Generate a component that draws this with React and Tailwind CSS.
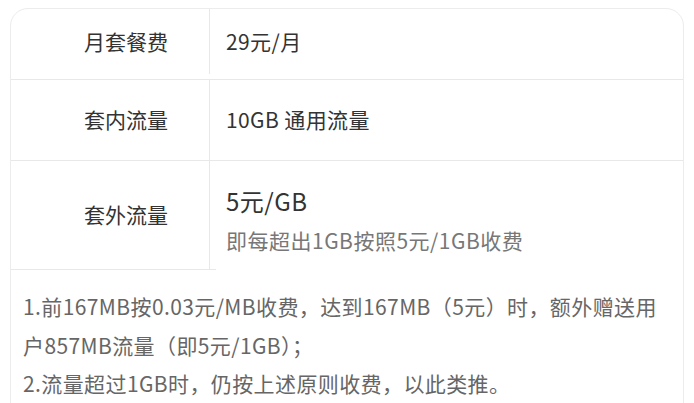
import React from 'react';

const rows = [
  { label: '月套餐费', value: '29元/月', h: 'h-[70px] pb-[5px]' },
  { label: '套内流量', value: '10GB 通用流量', h: 'h-[80px]' },
];

const App = () => {
  return (
    <div className="min-h-screen w-full bg-white pt-[8px] pl-[10px] pr-[10px] font-['Noto_Sans_CJK_SC','Noto_Sans',sans-serif]">
      <div className="rounded-t-[18px] border border-[#ececec] bg-white pb-10">
        {rows.map((r) => (
          <div key={r.label} className="border-b border-[#e8e8e8]">
            <div className={`flex ${r.h}`}>
              <div className="flex w-[199px] shrink-0 items-center justify-center border-r border-[#e8e8e8] pl-[32px] text-[21px] text-[#333]">
                {r.label}
              </div>
              <div className="flex items-center pl-[16px] text-[21px] tracking-[0.4px] text-[#333]">{r.value}</div>
            </div>
          </div>
        ))}

        {/* 套外流量 */}
        <div className="flex h-[108px]">
          <div className="flex w-[199px] shrink-0 items-center justify-center border-r border-[#e8e8e8] pl-[32px] text-[21px] text-[#333]">
            套外流量
          </div>
          <div className="flex flex-col justify-center pl-[16px] pt-[10px]">
            <p className="text-[24px] leading-[30px] tracking-[0.5px] text-[#333]">5元/GB</p>
            <p className="mt-[10px] text-[21px] leading-[28px] tracking-[0.5px] text-[#777]">即每超出1GB按照5元/1GB收费</p>
          </div>
        </div>
        <div className="h-px w-[205px] bg-[#e8e8e8]" />

        <div className="px-[12px] pt-[17px] text-[21px] leading-[38.5px] tracking-[0.4px] text-[#666]">
          <p>1.前167MB按0.03元/MB收费，达到167MB（5元）时，额外赠送用户857MB流量（即5元/1GB）；</p>
          <p>2.流量超过1GB时，仍按上述原则收费，以此类推。</p>
        </div>
      </div>
    </div>
  );
};

export default App;
